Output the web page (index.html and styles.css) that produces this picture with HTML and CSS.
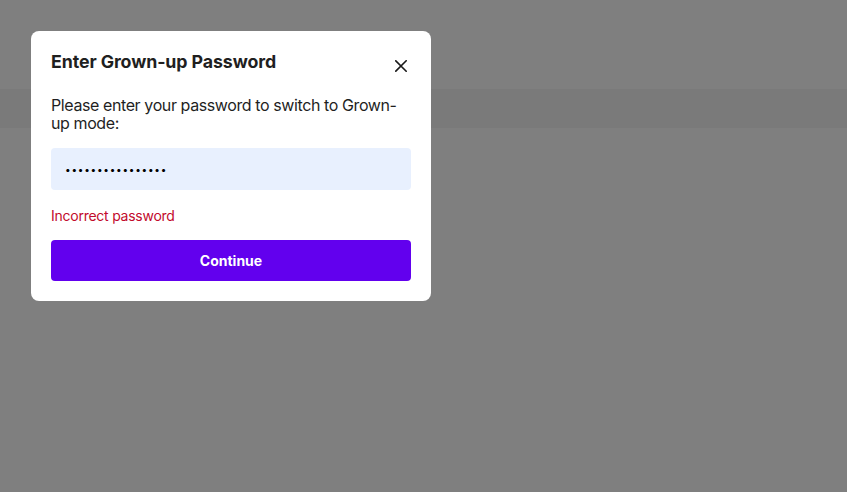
FILE: index.html
```html
<!DOCTYPE html>
<html>
<head>
<meta charset="utf-8">
<link rel="stylesheet" href="styles.css">
</head>
<body>
<div class="page">
  <div class="topbar"></div>
  <div class="band"></div>
</div>
<div class="overlay">
  <div class="modal">
    <div class="modal-head">
      <h2 class="title">Enter Grown-up Password</h2>
      <button class="close" aria-label="Close">
        <svg width="12" height="12" viewBox="0 0 12 12"><path d="M0.8 0.8L11.2 11.2M11.2 0.8L0.8 11.2" stroke="#1a1a1a" stroke-width="1.6" stroke-linecap="square"/></svg>
      </button>
    </div>
    <p class="desc">Please enter your password to switch to Grown-up mode:</p>
    <div class="input">••••••••••••••••</div>
    <p class="error">Incorrect password</p>
    <button class="btn">Continue</button>
  </div>
</div>
</body>
</html>
```
FILE: styles.css
```css
html, body { margin: 0; padding: 0; }
body {
  font-family: Inter, "Noto Sans", sans-serif;
  background: #ffffff;
  width: 847px;
  height: 492px;
  overflow: hidden;
  position: relative;
}
.page { display: flex; flex-direction: column; }
.topbar { height: 89px; background: #ffffff; }
.band { height: 39px; background: #f4f4f4; }
.overlay {
  position: absolute;
  inset: 0;
  background: rgba(0,0,0,0.5);
  padding: 31px;
}
.modal {
  width: 360px;
  background: #fff;
  border-radius: 8px;
  padding: 20px;
  box-sizing: content-box;
}
.modal-head {
  display: flex;
  justify-content: space-between;
  align-items: flex-start;
}
.title {
  margin: 0;
  font-size: 17.8px;
  font-weight: 700;
  line-height: 22px;
  color: #1f1f1f;
  letter-spacing: -0.1px;
}
.close {
  border: 0;
  background: none;
  padding: 0;
  margin: 9px 4px 0 0;
  width: 12px;
  height: 12px;
  display: flex;
}
.desc {
  margin: 23px 0 0;
  font-size: 16px;
  line-height: 18px;
  color: #1f1f1f;
  letter-spacing: -0.4px;
}
.input {
  margin-top: 16px;
  height: 42px;
  background: #e8f0fe;
  border-radius: 4px;
  padding: 0 14px;
  display: flex;
  align-items: center;
  font-size: 10px;
  letter-spacing: 0.75px;
  color: #000;
}
.error {
  margin: 17px 0 0;
  font-size: 14px;
  line-height: 18px;
  color: #c20a2c;
  letter-spacing: -0.25px;
}
.btn {
  margin-top: 15px;
  width: 100%;
  height: 41px;
  border: 0;
  border-radius: 4px;
  background: #6200ee;
  color: #fff;
  font-family: Inter, "Noto Sans", sans-serif;
  font-size: 14px;
  font-weight: 700;
  display: block;
}
```
